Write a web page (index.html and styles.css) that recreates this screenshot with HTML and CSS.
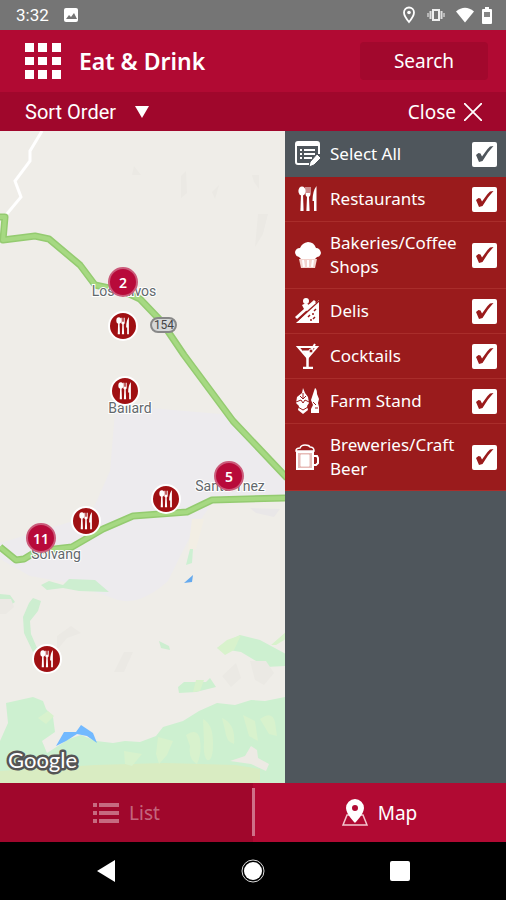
FILE: index.html
```html
<!DOCTYPE html>
<html lang="en">
  <head>
    <meta charset="utf-8">
    <meta name="viewport" content="width=device-width, initial-scale=1">
    <title>Eat &amp; Drink</title>
    <link rel="stylesheet" href="styles.css">
  </head>
  <body>
    <svg class="defs" aria-hidden="true">
      <symbol id="utensils" viewBox="0 0 20 26">
        <ellipse cx="4" cy="5" rx="3.600" ry="4.600"/>
        <path d="M3 8h2l.6 17h-3.200z"/>
        <path d="M7.500 1h1v6h1V1h1v6h1V1h1v7q0 2-1.500 3l.6 14H8.400L9 11Q7.500 10 7.500 8z"/>
        <path d="M18.500 0v25h-2.500V15h-1.500Q14.500 5 18.500 0z"/>
      </symbol>
      <path id="highways" d="M0 86l5 0-2 23 32-4 14 3 31 26 15 20 28 6 17 8 21 22 23 34 49 66 54 57M0 416l16 13 8-1 13-8 35-4 31-18 30-13 54-4 25-12 74-2"/>
    </svg>

    <div class="statusbar">
      <span class="time">3:32</span>
      <svg width="16" height="16" viewBox="0 0 16 16"><rect x="1" y="1" width="14" height="14" rx="2" fill="#fff"/><path d="M3 12l3-4 2 2 3-4 3 6z" fill="#757575"/></svg>
      <div class="signals">
        <svg width="14" height="18" viewBox="0 0 14 18"><path d="M7 1.500a5 5 0 0 0-5 5C2 10 7 16 7 16s5-6 5-9.500a5 5 0 0 0-5-5z" fill="none" stroke="#fff" stroke-width="1.800"/><circle cx="7" cy="6.500" r="1.800" fill="#fff"/></svg>
        <svg width="18" height="14" viewBox="0 0 18 14"><rect x="6" y="2" width="6" height="10" fill="#757575" stroke="#eee" stroke-width="2"/><path d="M3.500 3v8M14.500 3v8" stroke="#ddd" stroke-width="2"/><path d="M1 5v4M17 5v4" stroke="#ccc" stroke-width="1.500"/></svg>
        <svg width="18" height="16" viewBox="0 0 18 16"><path d="M0 4.500Q9-3 18 4.500L9 15.500z" fill="#fff"/></svg>
        <svg width="10" height="17" viewBox="0 0 10 17"><path d="M3 0h4v2h2q1 0 1 1v13q0 1-1 1H1q-1 0-1-1V3q0-1 1-1h2z" fill="#fff"/><path d="M2 5h6v5H2z" fill="#858585"/></svg>
      </div>
    </div>

    <header class="header">
      <button class="menu" aria-label="Menu">
        <svg width="36" height="36" viewBox="0 0 36 36" fill="#fff"><path d="M0 0h9v9H0zM13 0h9v9h-9zM27 0h9v9h-9zM0 14h9v8H0zM13 14h9v8h-9zM27 14h9v8h-9zM0 27h9v9H0zM13 27h9v9h-9zM27 27h9v9h-9z"/></svg>
      </button>
      <h1>Eat &amp; Drink</h1>
      <button class="search">Search</button>
    </header>

    <div class="toolbar">
      <label class="sort">
        <select aria-label="Sort Order">
          <option>Sort Order</option>
        </select>
        <svg width="14" height="12" viewBox="0 0 14 12"><path d="M0 0h14L7 12z" fill="#fff"/></svg>
      </label>
      <button class="close">Close
        <svg width="18" height="18" viewBox="0 0 18 18"><path d="M0 0l18 18M18 0L0 18" stroke="#fff" stroke-width="1.800"/></svg>
      </button>
    </div>

    <main class="main">
      <div class="map">
        <svg class="terrain" width="100%" height="100%">
          <path d="M115 280L150 277 232 284 286 345V366L212 372 193 400Q180 425 168 450 140 475 118 469L70 452 30 445 0 428V412L90 385 110 340z" fill="#edebee"/>
          <path d="M192 388l12 0-8 30-8 2z" fill="#f2eee4"/>
          <path d="M190 418h3l-1 14-6 2z" fill="#cdf0d2"/>
          <path d="M41 454l8-4 14 4 6-6 26 1 14 12-30-1-16-3-16 2zM0 463l10 1 5 7-6 4H0zM33 467l8 3-3 10-8 10 1 13 6 14-4 4-9-19-1-16 6-14zM159 510l10 5 1 4-9-2z" fill="#cdeed0"/>
          <path d="M6 572l27-6 10 4 3 8 7 8 2 15-13 9 5 12 22-14 12-4 15 6 17 2 12-2 15 1 16-6 7-9 20-6 16-10 18-8 18 2 16-5 14 1 20-4V652H0V610l8-18z" fill="#cdf0d0"/>
          <path d="M178 556l6-5 22 0 4-4 6 9-20 5-17 1zM217 517l9-6 14-7 20 5 26 14v12l-20 1-25-15z" fill="#cdf0d0"/>
          <path d="M217 517l10-8 14-5-7 15-9 5zM196 549l-3 12 7-1 4-11zM286 501l-15 13 5 0 10-6z" fill="#d8f2cc"/>
          <path d="M0 640l95-6 70-2 70 2 25 4V652H0z" fill="#d9ecc2"/>
          <path d="M186 604q12-8 14 5t-3 24q-9-5-7-18zM203 588q10 5 10 24t-6 17q-4-4-3-18zM222 587q14 6 12 26-8-2-9-14zM243 584l12 6 3 20-9-5zM260 588q12-9 15 3l2 14-8-2zM158 606l15 4-6 14-8 9-3-10zM124 620l18 3-10 12-7-2zM38 587l10-7 6 5-8 8z" fill="#d8f2cd"/>
          <path d="M230 630l15-5 6-10 6 4 1 8 11 6-3 7-15-7z" fill="#edeae4"/>
          <path d="M0 468h11l3 8-8 7H0zM57 505l14-10 10 7-14 5-10 12zM114 541l10-20 9 0-9 20zM222 545l14-13 5 15-10 9zM250 530l16 0 8 12-10 12-9-5zM181 45l5-5 1 22-6 5zM134 35l7 9-9 0zM252 44l7 0 0 14-5-7zM212 61l7-7-4 14zM258 83l10 0-5 20-8 13z" fill="#ebe9e4"/>
          <path d="M250 377l30 1-6 8-18-4z" fill="#e9e7e8"/>
          <path d="M56 615l8-14 12 0 5-7 12 8 4 10-10-7-10-2-11 7z" fill="#72b9ff"/>
          <path d="M184 452l9-8-1 7z" fill="#64a9ee"/>
          <path d="M42 0L30 20v10L15 50l6 16L6 84" fill="none" stroke="#fff" stroke-width="3"/>
          <g fill="none" stroke-linejoin="round">
            <use href="#highways" stroke="#94cb70" stroke-width="7"/>
            <use href="#highways" stroke="#a6d982" stroke-width="4"/>
          </g>
          <rect x="151" y="187" width="25" height="14" rx="7" fill="#d6d8d8" stroke="#888" stroke-width="2"/>
          <text class="shield" x="164" y="198">154</text>
          <g class="towns">
            <text x="124" y="165">Los Olivos</text>
            <text x="130" y="282">Ballard</text>
            <text x="230" y="360">Santa Ynez</text>
            <text x="56" y="428">Solvang</text>
          </g>
          <svg y="100%" overflow="visible"><text class="google" x="8" y="-15">Google</text></svg>
        </svg>
        <button class="cluster los-olivos">2</button>
        <button class="cluster santa-ynez">5</button>
        <button class="cluster solvang">11</button>
        <button class="pin pin-1" aria-label="Restaurant"><svg width="14" height="18"><use href="#utensils"/></svg></button>
        <button class="pin pin-2" aria-label="Restaurant"><svg width="14" height="18"><use href="#utensils"/></svg></button>
        <button class="pin pin-3" aria-label="Restaurant"><svg width="14" height="18"><use href="#utensils"/></svg></button>
        <button class="pin pin-4" aria-label="Restaurant"><svg width="14" height="18"><use href="#utensils"/></svg></button>
        <button class="pin pin-5" aria-label="Restaurant"><svg width="14" height="18"><use href="#utensils"/></svg></button>
      </div>

      <aside class="filters">
        <label class="filter all">
          <svg width="26" height="26" viewBox="0 0 26 26"><path d="M24 13V3q0-2-2-2H3Q1 1 1 3v18q0 2 2 2h11" fill="none" stroke="#fff" stroke-width="2"/><path d="M1 2h23v3H1z"/><path d="M5 8h2v2H5zM9 8h11v2H9zM5 12h2v2H5zM9 12h11v2H9zM5 16h2v2H5zM9 16h8v2H9z"/><path d="M22 13l4 4-7 7-5 2 1-5z" stroke="#4f565c"/></svg>
          <span>Select All</span>
          <input type="checkbox" checked>
        </label>
        <label class="filter">
          <svg width="26" height="26"><use href="#utensils"/></svg>
          <span>Restaurants</span>
          <input type="checkbox" checked>
        </label>
        <label class="filter">
          <svg width="26" height="26" viewBox="0 0 26 26"><path d="M4 15q-4-1-4-5 1-4 5-4 2-5 8-6 6 0 8 6 4 0 5 5-1 4-4 4l-2 2H6z"/><path d="M4 17h18l-2 9H6z" fill="#f3d3ce"/><path d="M8 18l1 7M13 18v7M18 18l-1 7" stroke="#fff" stroke-width="2"/></svg>
          <span>Bakeries/Coffee Shops</span>
          <input type="checkbox" checked>
        </label>
        <label class="filter">
          <svg width="26" height="26" viewBox="0 0 26 26"><path d="M24 2v23H1z"/><path d="M1 20L20 3" stroke="#fff" stroke-width="3"/><path d="M2 23L24 3" stroke="#9a1b1c" stroke-width="1.500"/><circle cx="11" cy="3" r="3"/><path d="M7 7l4-2 3 2 4-3 3 1-9 8-3-2z"/><path d="M13 19l2-2M18 21l2-2M19 13l2-2M15 22h2M17 16h2" stroke="#9a1b1c" stroke-width="1.500"/></svg>
          <span>Delis</span>
          <input type="checkbox" checked>
        </label>
        <label class="filter">
          <svg width="26" height="26" viewBox="0 0 26 26"><g fill="none" stroke="#fff"><path d="M3 4h19l-9.500 11z" stroke-width="2"/><path d="M8 8h9l-4.500 6z" fill="#fff"/><path d="M15 9l5-8" stroke-width="2"/><circle cx="16" cy="8" r="2" fill="#9a1b1c"/><path d="M12.500 14v10M8 25h10" stroke-width="2.500"/></g></svg>
          <span>Cocktails</span>
          <input type="checkbox" checked>
        </label>
        <label class="filter">
          <svg width="26" height="26" viewBox="0 0 26 26"><path d="M8 0l2 5 3 4 1 6-2 3 1 4-5 4-5-4 1-4-3-3 1-6 5-4z"/><path d="M8 5v5M1 14l5-2 2 3 2-3 4 2M3 19l5 3 5-3M5 8l3 3 3-3" fill="none" stroke="#9a1b1c"/><path d="M20 0q2 1 2 6l2 5-1 4 1 4v6h-8v-4l2-4-2-5 2-6z"/><path d="M18 14l3 3M20 20h3" stroke="#9a1b1c"/></svg>
          <span>Farm Stand</span>
          <input type="checkbox" checked>
        </label>
        <label class="filter">
          <svg width="26" height="26" viewBox="0 0 26 26"><g fill="none" stroke="#fff"><path d="M1 7Q1 4 5 4q1-3 5-3 4 0 5 2 4 0 4 4z" stroke-width="1.500"/><path d="M2 8h16v17H2z" fill="#e7bcb8" stroke-width="2"/><path d="M6 11h8v11H6z" fill="#fff"/><path d="M18 12h4l1 2v5l-2 2h-3" stroke-width="2"/></g></svg>
          <span>Breweries/Craft Beer</span>
          <input type="checkbox" checked>
        </label>
      </aside>
    </main>

    <div class="tabs">
      <button class="tab">
        <svg width="26" height="20" viewBox="0 0 26 20" fill="#fff"><path d="M0 0h4v4H0zM6 0h20v4H6zM0 8h4v4H0zM6 8h20v4H6zM0 16h4v4H0zM6 16h20v4H6z"/></svg>
        List
      </button>
      <button class="tab active">
        <svg width="26" height="28" viewBox="0 0 26 28"><path d="M7 16H5L1 26h24l-4-10h-2" fill="none" stroke="#f3c6cf" stroke-width="1.500"/><path d="M13 0a9 9 0 0 0-9 9c0 6 9 15 9 15s9-9 9-15a9 9 0 0 0-9-9zm0 6a3 3 0 1 1 0 6 3 3 0 0 1 0-6z" fill="#fff" fill-rule="evenodd"/></svg>
        Map
      </button>
    </div>

    <nav class="navbar">
      <button aria-label="Back"><svg width="18" height="22" viewBox="0 0 18 22"><path d="M0 11L18 0v22z" fill="#fff"/></svg></button>
      <button aria-label="Home"><svg width="24" height="24" viewBox="0 0 24 24"><circle cx="12" cy="12" r="11" fill="none" stroke="#ddd"/><circle cx="12" cy="12" r="9" fill="#fff"/></svg></button>
      <button aria-label="Recent apps"><svg width="20" height="20" viewBox="0 0 20 20"><rect width="20" height="20" rx="2" fill="#fff"/></svg></button>
    </nav>
  </body>
</html>
```

FILE: styles.css
```css
* { box-sizing: border-box; }

body { margin: 0; min-height: 100vh; display: flex; flex-direction: column; font-family: "Noto Sans", "Open Sans", sans-serif; font-size: 19px; color: #fff; background: #000; }

button, select { margin: 0; padding: 0; border: none; background: none; font: inherit; color: inherit; }
svg { flex: none; display: block; }

.defs { position: absolute; width: 0; height: 0; }

.statusbar { display: flex; align-items: center; gap: 14px; height: 30px; padding: 0 14px 0 16px; background: #757575; font-family: Roboto, sans-serif; font-size: 17px; }
.signals { display: flex; align-items: center; gap: 11px; margin-left: auto; }
.signals svg:last-child { margin-left: -3px; }

.header { display: flex; align-items: center; height: 62px; padding: 0 18px 0 25px; background: #b10a33; }
.header h1 { flex: 1; margin: 0 0 0 18px; font-size: 23px; font-weight: 600; }
.search { width: 128px; height: 38px; border-radius: 4px; background: #a2082d; }

.toolbar { display: flex; align-items: center; justify-content: space-between; height: 39px; padding: 0 24px 0 25px; background: #a0072c; }
.sort { display: flex; align-items: center; gap: 18px; font-family: Roboto, sans-serif; font-size: 20px; }
.sort select { appearance: none; }
.close { display: flex; align-items: center; gap: 8px; }

.main { flex: 1; display: grid; grid-template-columns: 1fr 221px; }

.map { position: relative; overflow: hidden; background: #efede8; }
.terrain { position: absolute; }
.towns { font: 14px Roboto, sans-serif; fill: #62686c; stroke: #fff; stroke-width: 2px; paint-order: stroke; text-anchor: middle; }
.shield { font: 12px Roboto, sans-serif; fill: #444; text-anchor: middle; }
.google { font: 22px Lato, sans-serif; fill: #fff; stroke: #555; stroke-width: 5px; stroke-linejoin: round; paint-order: stroke; }

.cluster, .pin { position: absolute; width: 30px; height: 30px; margin: -15px 0 0 -15px; border-radius: 50%; display: flex; align-items: center; justify-content: center; }
.cluster { border: 2px solid #cb5c7b; background: #b80a3a; font-size: 14px; font-weight: 600; }
.pin { border: 2px solid #fff; background: #a01013; fill: #fff; }
.los-olivos { left: 123px; top: 151px; }
.santa-ynez { left: 229px; top: 345px; }
.solvang { left: 41px; top: 407px; }
.pin-1 { left: 123px; top: 195px; }
.pin-2 { left: 125px; top: 260px; }
.pin-3 { left: 166px; top: 368px; }
.pin-4 { left: 86px; top: 390px; }
.pin-5 { left: 47px; top: 528px; }

.filters { background: #4f565c; }
.filter { display: flex; align-items: center; gap: 9px; min-height: 45px; padding: 9px 9px 9px 10px; border-bottom: 1px solid #a92d2b; background: #9a1b1c; font-size: 17px; line-height: 24px; }
.filter.all { min-height: 46px; border-bottom: none; background: #4f565c; }
.filter svg { fill: #fff; }
.filter span { flex: 1; }
.filter input { appearance: none; flex: none; width: 25px; height: 25px; margin: 0; border-radius: 2px; background: #fff; color: #9a1b1c; }
.filter.all input { color: #4f565c; }
.filter input:checked::before { content: ""; display: block; height: 25px; background: currentColor; clip-path: polygon(16% 54%, 26% 46%, 34% 48%, 40% 60%, 62% 30%, 72% 20%, 86% 18%, 64% 44%, 42% 78%, 28% 82%); }

.tabs { position: relative; display: grid; grid-template-columns: 1fr 1fr; height: 59px; }
.tabs::after { content: ""; position: absolute; left: 50%; top: 5px; bottom: 6px; width: 3px; margin-left: -1px; background: #cf7088; }
.tab { display: flex; align-items: center; justify-content: center; gap: 10px; background: #a0072c; color: rgba(255, 255, 255, 0.4); }
.tab svg { opacity: 0.4; }
.tab.active { background: #b10a33; color: #fff; }
.tab.active svg { opacity: 1; }

.navbar { display: grid; grid-template-columns: repeat(3, 1fr); height: 58px; padding: 0 33px; background: #000; }
.navbar button { display: flex; align-items: center; justify-content: center; }
```
